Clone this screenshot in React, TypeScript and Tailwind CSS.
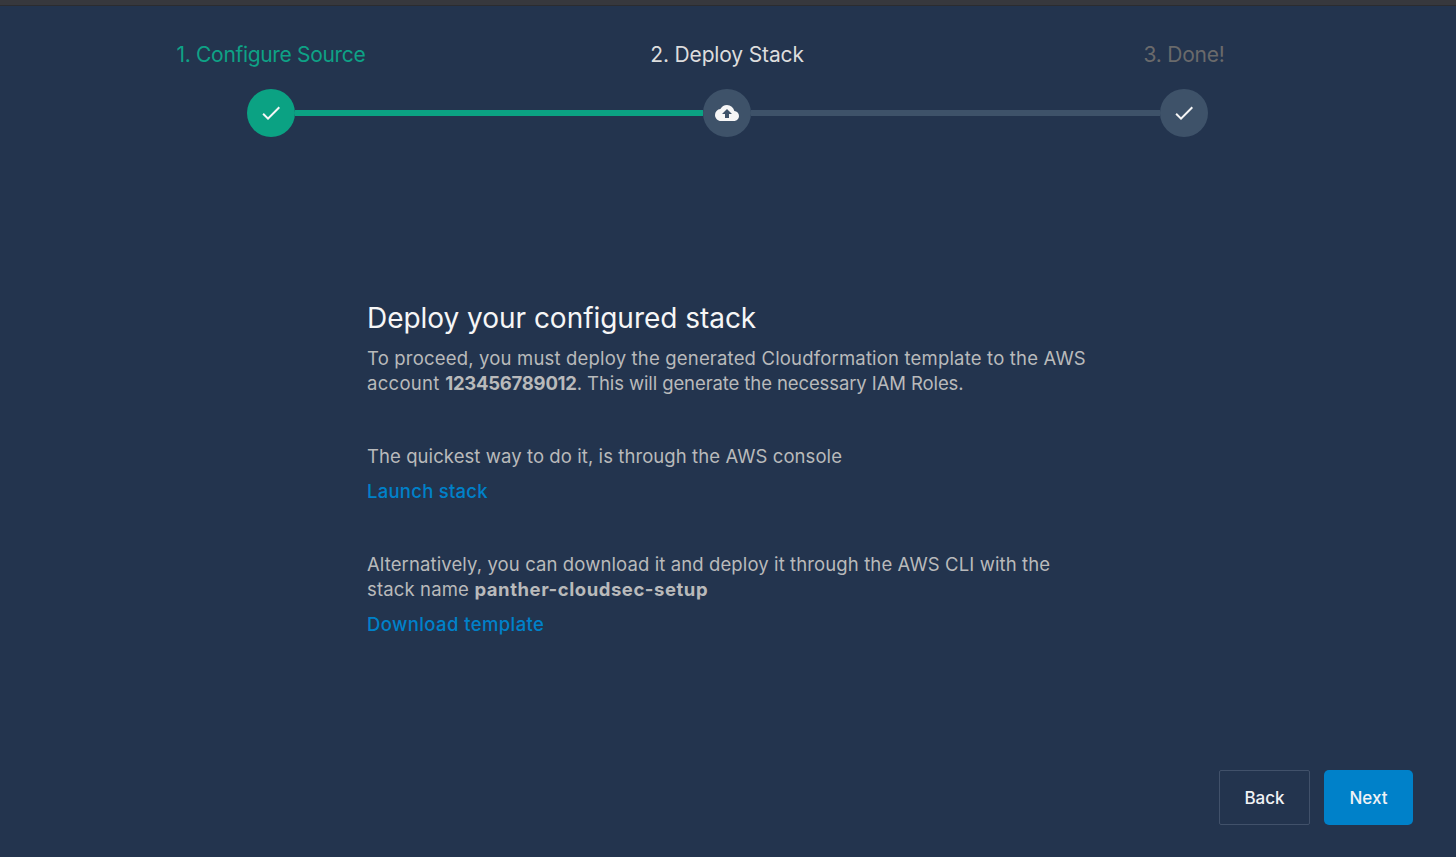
import type { ReactNode } from "react";
import { MdCheck, MdCloudUpload } from "react-icons/md";

function Step({ label, labelClass, circleClass, children }: { label: string; labelClass: string; circleClass: string; children: ReactNode }) {
  return (
    <div className="flex w-12 flex-col items-center">
      <span className={`text-[21px] leading-7 whitespace-nowrap ${labelClass}`}>{label}</span>
      <div className={`mt-5 flex size-12 items-center justify-center rounded-full text-[#f6f6f6] ${circleClass}`}>{children}</div>
    </div>
  );
}

export default function App() {
  return (
    <div className="flex h-[857px] w-full flex-col overflow-hidden bg-[#23344e] font-['Inter',sans-serif]">
      <div className="h-1.5 shrink-0 border-b border-[#2b2c30] bg-[#37383d]" />
      <header className="ml-[247px] mt-[35px] flex w-[961px] shrink-0">
        <Step label="1. Configure Source" labelClass="text-[#0ea286] tracking-[-0.32px]" circleClass="bg-[#0ba283]">
          <MdCheck size={24} />
        </Step>
        <div className="mt-[69px] h-1.5 w-[408px] bg-[#0ba283]" />
        <Step label="2. Deploy Stack" labelClass="text-[#dddddd] tracking-[-0.15px]" circleClass="bg-[#3e5269]">
          <MdCloudUpload size={24} />
        </Step>
        <div className="mt-[69px] h-1.5 w-[409px] bg-[#3e5269]" />
        <Step label="3. Done!" labelClass="text-[#6a6a6b] tracking-[-0.25px]" circleClass="bg-[#3e5269]">
          <MdCheck size={24} />
        </Step>
      </header>
      <main className="ml-[367px] mt-[161px] flex flex-1 flex-col items-start whitespace-nowrap text-[18.5px] leading-[25px] text-[#b9babb]">
        <h1 className="text-[28px] leading-10 tracking-[-0.03px] text-[#f6f6f6]">Deploy your configured stack</h1>
        <p className="mt-2">
          <span className="block w-fit tracking-[0.18px]">To proceed, you must deploy the generated Cloudformation template to the AWS</span>
          <span className="block w-fit tracking-[-0.1px]"><span className="tracking-[0.3px]">account </span><b className="font-bold tracking-[-0.25px]">123456789012</b>. This will generate the necessary IAM Roles.</span>
        </p>
        <p className="mt-12 tracking-[0.08px]">The quickest way to do it, is through the AWS console</p>
        <a className="mt-2.5 font-medium tracking-[0.25px] text-[#0081c9]">Launch stack</a>
        <p className="mt-12">
          <span className="block w-fit tracking-[0.11px]">Alternatively, you can download it and deploy it through the AWS CLI with the</span>
          <span className="block w-fit tracking-[0.15px]">stack name <b className="font-bold tracking-[0.55px]">panther-cloudsec-setup</b></span>
        </p>
        <a className="mt-2.5 font-medium tracking-[0.4px] text-[#0081c9]">Download template</a>
      </main>
      <footer className="mb-8 mr-[43px] flex shrink-0 justify-end gap-3.5 text-[17px] font-medium text-[#f0f2f5]">
        <button className="h-[55px] w-[91px] rounded-xs border border-[#41516a] pt-0.5">Back</button>
        <button className="h-[55px] w-[89px] rounded-[5px] bg-[#0081c9] pt-0.5">Next</button>
      </footer>
    </div>
  );
}
